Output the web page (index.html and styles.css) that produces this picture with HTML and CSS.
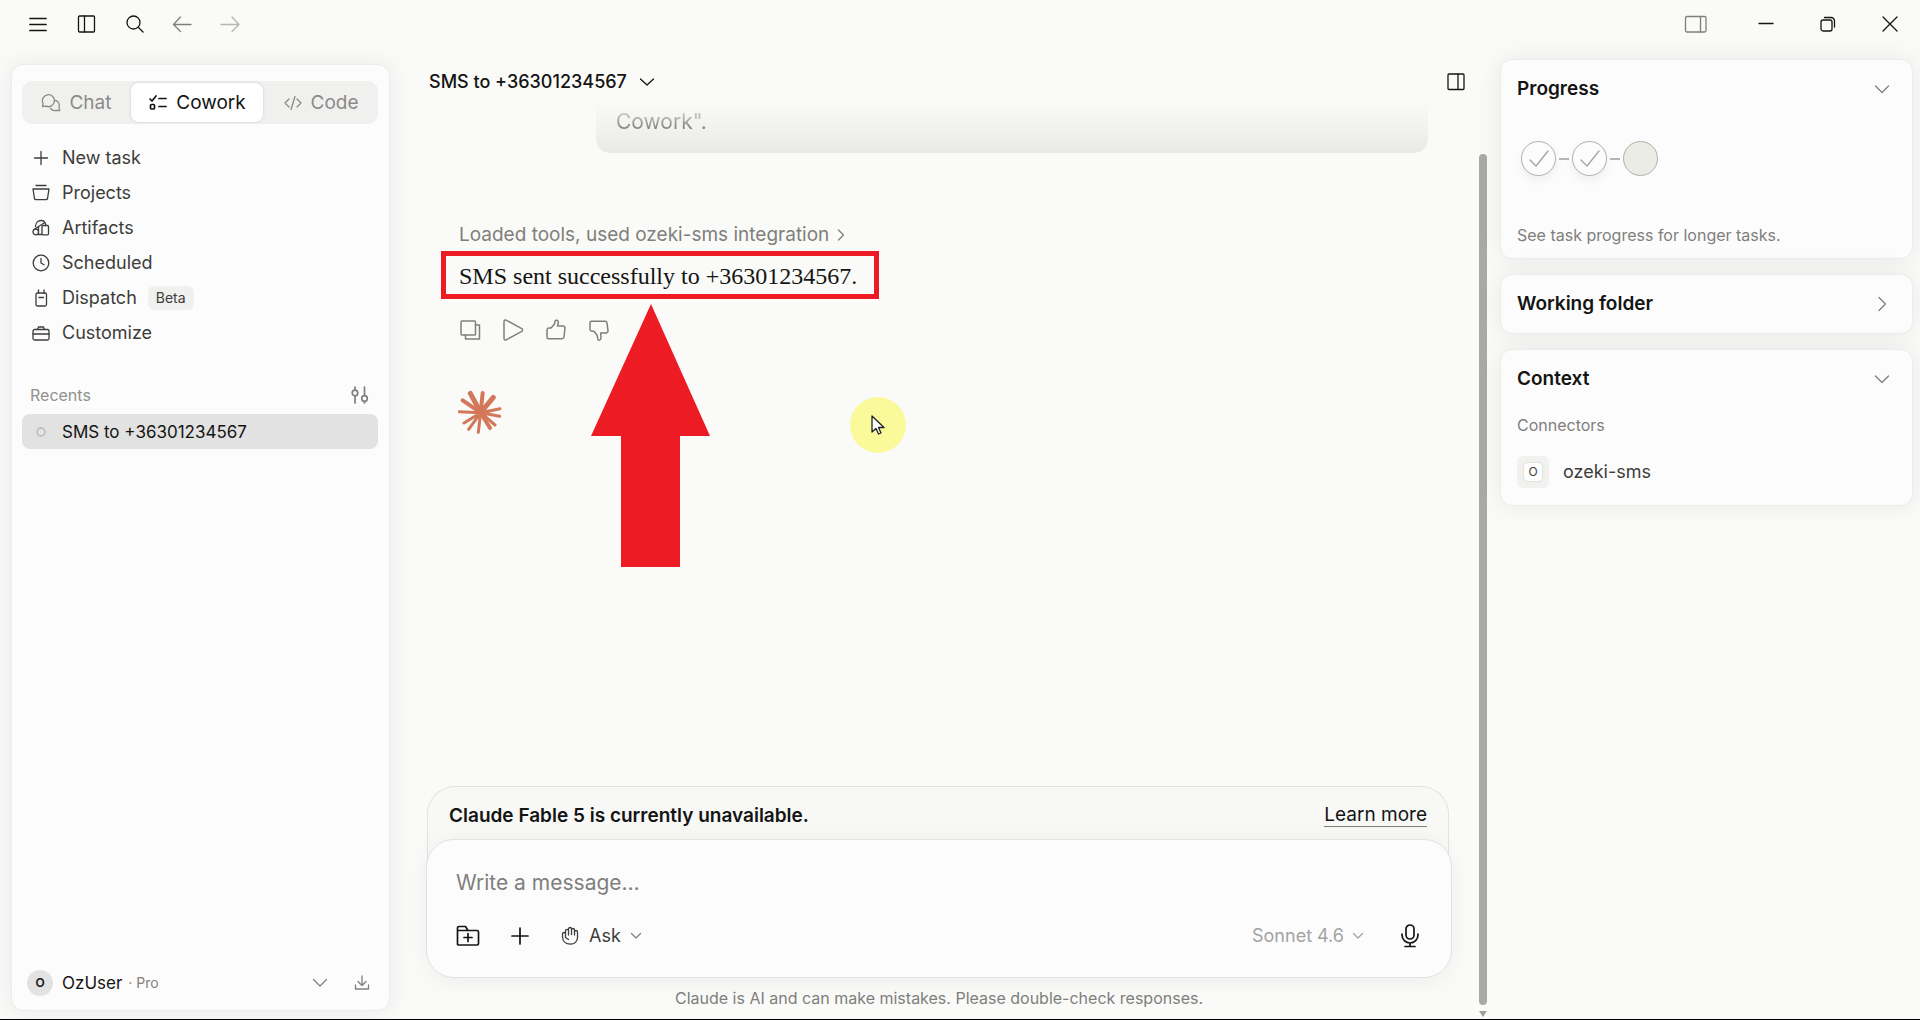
FILE: index.html
```html
<!DOCTYPE html>
<html lang="en">
<head>
    <meta charset="UTF-8">
    <meta name="viewport" content="width=device-width, initial-scale=1.0">
    <title>SMS to +36301234567</title>
    <link rel="stylesheet" href="styles.css">
</head>
<body>

    <!-- Window bar -->
    <header class="titlebar">
        <div class="titlebar-group">
            <button class="icon-button" aria-label="Menu">
                <svg width="20" height="20" viewBox="0 0 20 20" class="strong"><path d="M2 4.5h16M2 10.5h16M2 16.5h16"/></svg>
            </button>
            <button class="icon-button" aria-label="Toggle sidebar">
                <svg width="20" height="20" viewBox="0 0 20 20"><rect x="2.500" y="2" width="16" height="16" rx="1"/><path d="M8.500 2v16"/></svg>
            </button>
            <button class="icon-button" aria-label="Search">
                <svg width="20" height="20" viewBox="0 0 20 20"><circle cx="9.500" cy="8.5" r="6.500"/><path d="M14.500 13.500l4.500 4.500"/></svg>
            </button>
            <button class="icon-button muted" aria-label="Back">
                <svg width="20" height="20" viewBox="0 0 20 20"><path d="M19 10.500H1.500M8.500 3l-7 7.500 7 7"/></svg>
            </button>
            <button class="icon-button faint" aria-label="Forward">
                <svg width="20" height="20" viewBox="0 0 20 20"><path d="M1 10.500h18M12 3l7 7.500-7 7"/></svg>
            </button>
        </div>
        <div class="titlebar-group window-controls">
            <button class="icon-button muted" aria-label="Toggle panel">
                <svg width="24" height="20" viewBox="0 0 24 20"><rect x="1.500" y="2.500" width="20.500" height="15.500" rx="1.500"/><path d="M16.500 2.500v15.500"/></svg>
            </button>
            <button class="icon-button" aria-label="Minimize">
                <svg width="16" height="16" viewBox="0 0 16 16"><path d="M1 7.500h14"/></svg>
            </button>
            <button class="icon-button" aria-label="Restore">
                <svg width="16" height="16" viewBox="0 0 16 16"><rect x="1" y="4" width="11" height="11" rx="2"/><path d="M4.500 1.500h6.500a3.500 3.500 0 0 1 3.500 3.500v6"/></svg>
            </button>
            <button class="icon-button" aria-label="Close">
                <svg width="16" height="16" viewBox="0 0 16 16"><path d="M1 1l14 14M15 1L1 15"/></svg>
            </button>
        </div>
    </header>

    <div class="shell">

        <!-- Sidebar -->
        <aside class="sidebar card">
            <div class="tabs">
                <button class="tab">
                    <svg width="20" height="20" viewBox="0 0 20 20"><path d="M1.500 13.500l.6-3A6 6 0 1 1 5 13.200z"/><path d="M14.500 7.500a5 5 0 0 1 3.600 6.500l.5 3.500h-4a5 5 0 0 1-5-2"/></svg>
                    Chat
                </button>
                <button class="tab active">
                    <svg width="20" height="20" viewBox="0 0 20 20" class="strong"><path d="M2 6l2 2 4-5M11 5.500h7M11 13.500h7"/><rect x="2.500" y="11.500" width="4" height="4.500" rx="1"/></svg>
                    Cowork
                </button>
                <button class="tab">
                    <svg width="20" height="20" viewBox="0 0 20 20"><path d="M6 6l-4 4 4 4M14 6l4 4-4 4M12 3.500L8 16.500"/></svg>
                    Code
                </button>
            </div>

            <nav class="menu">
                <a href="#" class="menu-item">
                    <svg width="20" height="20" viewBox="0 0 20 20"><path d="M3.500 10h13M10 3.500v13"/></svg>
                    New task
                </a>
                <a href="#" class="menu-item">
                    <svg width="20" height="20" viewBox="0 0 20 20"><path d="M5 2.500h10M2 6h16l-1.500 9.500a1.500 1.500 0 0 1-1.500 1.200H5a1.500 1.500 0 0 1-1.500-1.200z"/></svg>
                    Projects
                </a>
                <a href="#" class="menu-item">
                    <svg width="20" height="20" viewBox="0 0 20 20"><circle cx="4.800" cy="14" r="2.800"/><rect x="11" y="7.500" width="6.500" height="9.300" rx="1"/><path d="M4.500 8.500C4.500 4 8 2.500 10.500 2.500S14.500 5 15 7.500M3 11.500L13 5M7.500 13V8.500M7.500 16.500H11"/></svg>
                    Artifacts
                </a>
                <a href="#" class="menu-item">
                    <svg width="20" height="20" viewBox="0 0 20 20"><circle cx="10" cy="10" r="7.800"/><path d="M10 5.500V10l3 1.800"/></svg>
                    Scheduled
                </a>
                <a href="#" class="menu-item">
                    <svg width="20" height="20" viewBox="0 0 20 20"><rect x="5" y="5" width="10.500" height="13" rx="1.500"/><path d="M7.500 5V2M13 5V2M8 9.500h4.500"/></svg>
                    Dispatch
                    <span class="badge">Beta</span>
                </a>
                <a href="#" class="menu-item">
                    <svg width="20" height="20" viewBox="0 0 20 20"><rect x="2" y="6.500" width="16" height="10.500" rx="1.500"/><path d="M6.500 6.500L7.500 4h5l1 2.500M2 11h16"/></svg>
                    Customize
                </a>
            </nav>

            <div class="recents-head">
                <span>Recents</span>
                <button class="icon-button muted" aria-label="Filter recents">
                    <svg width="20" height="20" viewBox="0 0 20 20" class="strong"><circle cx="5" cy="8" r="2.800"/><path d="M5 2v3M5 11v7"/><circle cx="14.500" cy="13.500" r="2.800"/><path d="M14.500 2v8.500M14.500 16.500v1.500"/></svg>
                </button>
            </div>
            <a href="#" class="menu-item selected">
                <svg width="20" height="20" viewBox="0 0 20 20"><circle cx="10" cy="10" r="4"/></svg>
                SMS to +36301234567
            </a>

            <div class="account">
                <span class="avatar">O</span>
                <span class="account-name">OzUser</span>
                <span class="account-plan">· Pro</span>
                <button class="icon-button muted" aria-label="Account menu">
                    <svg width="16" height="16" viewBox="0 0 16 16"><path d="M1.500 4.500L8 11l6.500-6.500"/></svg>
                </button>
                <button class="icon-button muted" aria-label="Download">
                    <svg width="16" height="16" viewBox="0 0 16 16"><path d="M8 1v9M4 6.500L8 10.500l4-4M1.500 10v4h13v-4"/></svg>
                </button>
            </div>
        </aside>

        <!-- Conversation -->
        <main class="chat">
            <div class="chat-column">
                <div class="chat-head">
                    <button class="chat-title">
                        SMS to +36301234567
                        <svg width="16" height="16" viewBox="0 0 16 16"><path d="M1.500 5L8 11l6.500-6"/></svg>
                    </button>
                    <button class="icon-button" aria-label="Toggle details">
                        <svg width="20" height="20" viewBox="0 0 20 20"><rect x="2" y="2" width="16" height="15.500" rx="1"/><path d="M12 2v15.500"/></svg>
                    </button>
                </div>

                <div class="thread">
                    <div class="bubble">Cowork".</div>
                    <button class="tool-line">
                        Loaded tools, used ozeki-sms integration
                        <svg width="16" height="16" viewBox="0 0 16 16"><path d="M5.500 3l5 5-5 5"/></svg>
                    </button>
                    <p class="reply">SMS sent successfully to +36301234567.</p>
                    <div class="reply-actions">
                        <button class="icon-button muted" aria-label="Copy">
                            <svg width="22" height="22" viewBox="0 0 22 22"><rect x="2" y="2" width="14.500" height="14" rx="1"/><path d="M16.500 6H20.500v14H6.500v-4"/></svg>
                        </button>
                        <button class="icon-button muted" aria-label="Read aloud">
                            <svg width="22" height="22" viewBox="0 0 22 22"><path d="M2 2.500a1.500 1.500 0 0 1 2.200-1.300l15.600 8.500a1.500 1.500 0 0 1 0 2.600L4.200 20.800A1.500 1.500 0 0 1 2 19.500z"/></svg>
                        </button>
                        <button class="icon-button muted" aria-label="Good response">
                            <svg width="22" height="22" viewBox="0 0 22 22"><path d="M2 10.500a2 2 0 0 1 2-1.500h2L9.500 5l.7-3c.4-1.300 3.200-1 3.200 1.500l-.9 3.500h5.500a2 2 0 0 1 2 2.200l-1 8.800a2 2 0 0 1-2 1.800H3.500A1.500 1.500 0 0 1 2 18.300z"/></svg>
                        </button>
                        <button class="icon-button muted" aria-label="Bad response">
                            <svg width="22" height="22" viewBox="0 0 22 22"><path d="M2 10.500a2 2 0 0 0 2 1.800h2L9 16l1 4.500c.3 1.200 3 1 3-1.500l-.3-5H18a2 2 0 0 0 2-2.200L19 4a2 2 0 0 0-2-1.800H3.500A1.500 1.500 0 0 0 2 3.700z"/></svg>
                        </button>
                    </div>
                    <svg class="spark" width="44" height="44" viewBox="0 0 132 132">
                        <path stroke-width="15" d="M68 68L37 10M68 68L106 22"/>
                        <path stroke-width="12" d="M68 68L14 31M68 68L74 9M68 68L96 114"/>
                        <path stroke-width="9" d="M68 68L126 56M68 68L125 79M68 68L111 105M68 68L61 127M68 68L32 118M68 68L18 99M68 68L4 65"/>
                    </svg>
                </div>

                <div class="dock">
                    <div class="notice">
                        <strong>Claude Fable 5 is currently unavailable.</strong>
                        <a href="#">Learn more</a>
                    </div>
                    <form class="composer">
                        <textarea rows="1" aria-label="Message" placeholder="Write a message…"></textarea>
                        <div class="composer-tools">
                            <button type="button" class="icon-button" aria-label="Add folder">
                                <svg width="24" height="24" viewBox="0 0 24 24" class="strong"><path d="M1.500 20V4a1.500 1.500 0 0 1 1.500-1.500h6.500L12 6.500h9a1.500 1.500 0 0 1 1.500 1.500v11.500a1.500 1.500 0 0 1-1.500 1.500H2.500a1 1 0 0 1-1-1zM12 9.500v8M8 13.500h8M1.500 6.500H12"/></svg>
                            </button>
                            <button type="button" class="icon-button" aria-label="Add">
                                <svg width="20" height="20" viewBox="0 0 20 20" class="strong"><path d="M2 10h16M10 2v16"/></svg>
                            </button>
                            <button type="button" class="mode">
                                <svg width="20" height="20" viewBox="0 0 20 20"><path d="M5.500 10V4.800a1.500 1.500 0 0 1 3 0V9M8.500 8V3a1.500 1.500 0 0 1 3 0v5.500M11.500 4a1.500 1.500 0 0 1 3 0V9M14.500 6a1.500 1.500 0 0 1 3 0v5.500c0 4-3 6.700-7 6.700-4.500 0-8-2.700-8-7.700V8a1.500 1.500 0 0 1 3 0v3.500l3 2"/></svg>
                                Ask
                                <svg width="12" height="12" viewBox="0 0 12 12" class="muted"><path d="M1.500 3.500L6 8l4.500-4.500"/></svg>
                            </button>
                            <button type="button" class="model">
                                Sonnet 4.6
                                <svg width="12" height="12" viewBox="0 0 12 12"><path d="M1.500 3.500L6 8l4.500-4.500"/></svg>
                            </button>
                            <button type="button" class="icon-button" aria-label="Dictate">
                                <svg width="24" height="24" viewBox="0 0 24 24" class="strong"><rect x="8" y="1" width="8" height="14" rx="4"/><path d="M4 10v1a8 8 0 0 0 16 0v-1M12 19v3.500M7 22.500h10"/></svg>
                            </button>
                        </div>
                    </form>
                    <p class="disclaimer">Claude is AI and can make mistakes. Please double-check responses.</p>
                </div>
            </div>
            <div class="scrollbar">
                <div class="scrollbar-thumb"></div>
                <div class="scrollbar-arrow"></div>
            </div>
        </main>

        <!-- Details -->
        <aside class="details">
            <section class="card panel">
                <div class="panel-head">
                    <h2>Progress</h2>
                    <button class="icon-button muted" aria-label="Collapse progress">
                        <svg width="16" height="16" viewBox="0 0 16 16"><path d="M1.500 5L8 11.500 14.500 5"/></svg>
                    </button>
                </div>
                <div class="steps">
                    <span class="step"><svg width="20" height="20" viewBox="0 0 20 20"><path d="M1 11l6 6L19 2"/></svg></span>
                    <span class="step-link"></span>
                    <span class="step"><svg width="20" height="20" viewBox="0 0 20 20"><path d="M1 11l6 6L19 2"/></svg></span>
                    <span class="step-link"></span>
                    <span class="step pending"></span>
                </div>
                <p class="panel-note">See task progress for longer tasks.</p>
            </section>
            <section class="card panel">
                <div class="panel-head">
                    <h2>Working folder</h2>
                    <button class="icon-button muted" aria-label="Expand working folder">
                        <svg width="16" height="16" viewBox="0 0 16 16"><path d="M5 1.500L11.500 8 5 14.500"/></svg>
                    </button>
                </div>
            </section>
            <section class="card panel">
                <div class="panel-head">
                    <h2>Context</h2>
                    <button class="icon-button muted" aria-label="Collapse context">
                        <svg width="16" height="16" viewBox="0 0 16 16"><path d="M1.500 5L8 11.500 14.500 5"/></svg>
                    </button>
                </div>
                <p class="panel-label">Connectors</p>
                <div class="connector">
                    <span class="connector-icon"><span>O</span></span>
                    ozeki-sms
                </div>
            </section>
        </aside>
    </div>

    <!-- Callouts over the page -->
    <div class="callout-box"></div>
    <svg class="callout-arrow" width="119" height="263" viewBox="0 0 119 263"><path d="M60 0l59 132H89v131H30V132H0z"/></svg>
    <div class="pointer">
        <svg width="14" height="20" viewBox="0 0 14 20"><path d="M1 1v16l4-3.500 2.500 5.500 2.500-1-2.500-5.500H13z"/></svg>
    </div>

</body>
</html>
```

FILE: styles.css
```css
:root {
    --page: #fafaf8;
    --card: #fcfcfc;
    --line: #e2e2e2;
    --text: #141413;
    --text-soft: #3d3d3a;
    --muted: #7f7f7c;
    --faint: #b5b5b2;
    --red: #ed1c24;
}
* {
    box-sizing: border-box;
}
body {
    display: flex;
    flex-direction: column;
    height: 100vh;
    margin: 0;
    overflow: hidden;
    border-bottom: 1px solid #000;
    background: var(--page);
    color: var(--text);
    font-family: Inter, "Liberation Sans", sans-serif;
    font-size: 18px;
    line-height: 24px;
}
button {
    display: flex;
    align-items: center;
    padding: 0;
    border: none;
    background: none;
    color: inherit;
    font: inherit;
    cursor: pointer;
}
a {
    color: inherit;
    text-decoration: none;
}
h2, p {
    margin: 0;
}
svg {
    flex: none;
    fill: none;
    stroke: currentColor;
    stroke-width: 1.3;
    stroke-linecap: round;
    stroke-linejoin: round;
}
svg.strong {
    stroke-width: 1.7;
}
.card {
    background: var(--card);
    border: 1px solid #ececeb;
    border-radius: 12px;
    box-shadow: 0 0 26px rgba(0, 0, 0, 0.07);
}
.muted {
    color: var(--muted);
}
.faint {
    color: var(--faint);
}

/* Window bar */
.titlebar {
    display: flex;
    justify-content: space-between;
    height: 48px;
    padding: 0 22px 0 28px;
}
.titlebar-group {
    display: flex;
    align-items: center;
    gap: 28px;
}
.window-controls {
    gap: 46px;
}
.window-controls .muted {
    margin-right: 4px;
}

.shell {
    display: flex;
    flex: 1;
    min-height: 0;
}

/* Sidebar */
.sidebar {
    display: flex;
    flex-direction: column;
    width: 379px;
    margin: 16px 0 8px 11px;
    padding: 16px 11px 11px 10px;
}
.tabs {
    display: flex;
    gap: 2px;
    height: 43px;
    margin-bottom: 16px;
    padding: 2px;
    border-radius: 10px;
    background: #f0f0ef;
}
.tab {
    flex: 1 1 auto;
    justify-content: center;
    gap: 8px;
    border-radius: 8px;
    color: #8a8a87;
    font-size: 19px;
}
.tab.active {
    background: #fff;
    color: var(--text);
    box-shadow: 0 0 3px rgba(0, 0, 0, 0.15);
}
.menu-item {
    display: flex;
    align-items: center;
    gap: 11px;
    height: 35px;
    padding: 0 9px;
    border-radius: 8px;
    color: var(--text-soft);
}
.badge {
    padding: 0 8px;
    border-radius: 6px;
    background: #f0f0ee;
    font-size: 14px;
}
.recents-head {
    display: flex;
    align-items: center;
    justify-content: space-between;
    height: 38px;
    margin-top: 26px;
    padding: 0 8px;
    color: #91918e;
    font-size: 16px;
}
.menu-item.selected {
    background: #e2e2e2;
    color: var(--text);
    font-size: 17px;
}
.menu-item.selected svg {
    color: var(--faint);
}
.account {
    display: flex;
    align-items: center;
    height: 32px;
    margin-top: auto;
    padding: 0 8px 0 5px;
    color: var(--text);
    font-size: 17px;
}
.avatar {
    width: 26px;
    margin-right: 9px;
    border-radius: 50%;
    background: #e2e2e2;
    font-size: 12px;
    font-weight: 600;
    line-height: 26px;
    text-align: center;
}
.account-plan {
    margin: 0 auto 0 6px;
    color: var(--muted);
    font-size: 14px;
}
.account .icon-button {
    margin-left: 26px;
}

/* Conversation */
.chat {
    display: flex;
    flex: 1;
    min-width: 0;
    margin: 13px 0 0 36px;
}
.chat-column {
    display: flex;
    flex: 1;
    flex-direction: column;
    min-width: 0;
}
.chat-head {
    display: flex;
    align-items: center;
    justify-content: space-between;
    height: 41px;
    padding: 0 13px 0 3px;
}
.chat-title {
    gap: 12px;
    font-weight: 500;
}
.thread {
    display: flex;
    flex: 1;
    flex-direction: column;
    align-items: flex-start;
    min-height: 0;
    padding: 0 51px 0 33px;
}
.bubble {
    align-self: stretch;
    margin-left: 137px;
    padding: 8px 20px 19px;
    border-radius: 0 0 14px 14px;
    background: #e9e9e5;
    font-size: 21px;
    /* the last line of the prompt scrolls out under the header */
    -webkit-mask-image: linear-gradient(transparent, #000);
    mask-image: linear-gradient(transparent, #000);
}
.tool-line {
    gap: 4px;
    margin-top: 70px;
    color: var(--muted);
    font-size: 19px;
}
.reply {
    margin-top: 15px;
    font-family: "Liberation Serif", serif;
    font-size: 24px;
    line-height: 28px;
}
.reply-actions {
    display: flex;
    gap: 21px;
    margin-top: 29px;
}
.reply-actions svg {
    stroke-width: 1.5;
}
.spark {
    margin-top: 49px;
    margin-left: -1px;
    stroke: #d2775a;
}
.dock {
    margin-right: 27px;
}
.notice {
    display: flex;
    align-items: center;
    justify-content: space-between;
    height: 80px;
    margin: 0 3px -27px 1px;
    padding: 0 21px 22px;
    border: 1px solid var(--line);
    border-bottom: none;
    border-radius: 28px 28px 0 0;
    background: #f8f8f7;
    font-size: 19px;
}
.notice strong {
    font-weight: 600;
}
.notice a {
    border-bottom: 1px solid var(--muted);
    line-height: 22px;
}
.composer {
    position: relative;
    padding: 29px 29px 27px;
    border: 1px solid var(--line);
    border-radius: 28px;
    background: var(--card);
    box-shadow: 0 4px 24px rgba(0, 0, 0, 0.05);
}
.composer textarea {
    display: block;
    width: 100%;
    height: 28px;
    margin-bottom: 25px;
    padding: 0;
    border: none;
    outline: none;
    background: none;
    font-family: inherit;
    font-size: 21px;
    line-height: 28px;
    resize: none;
}
.composer textarea::placeholder {
    color: var(--muted);
}
.composer-tools {
    display: flex;
    align-items: center;
    height: 28px;
    gap: 30px;
}
.mode {
    gap: 9px;
    color: var(--text-soft);
}
.model {
    gap: 8px;
    margin: 0 4px 0 auto;
    color: #a3a3a0;
}
.disclaimer {
    padding: 8px 0 9px;
    color: var(--muted);
    font-size: 16px;
    text-align: center;
}
.scrollbar {
    display: flex;
    flex-direction: column;
    align-items: center;
    width: 8px;
    padding: 93px 0 2px;
}
.scrollbar-thumb {
    flex: 1;
    width: 8px;
    margin-bottom: 6px;
    border-radius: 4px;
    background: #a9a9a7;
}
.scrollbar-arrow {
    border: 4px solid transparent;
    border-top: 6px solid #a0a09e;
    border-bottom: none;
}

/* Details */
.details {
    display: flex;
    flex-direction: column;
    gap: 15px;
    width: 413px;
    margin: 11px 7px 0 13px;
}
.panel {
    padding: 17px 16px;
}
.panel-head {
    display: flex;
    align-items: center;
    justify-content: space-between;
    height: 24px;
    padding-right: 6px;
}
.panel h2 {
    font-size: 19px;
    font-weight: 600;
}
.steps {
    display: flex;
    align-items: center;
    margin: 40px 0 47px 4px;
}
.step {
    display: flex;
    align-items: center;
    justify-content: center;
    width: 35px;
    height: 35px;
    border: 1px solid #b0b0ae;
    border-radius: 50%;
    background: var(--card);
    color: #a3a3a0;
    box-shadow: 0 4px 10px rgba(0, 0, 0, 0.06);
}
.step.pending {
    background: #ecece6;
    box-shadow: none;
}
.step-link {
    width: 10px;
    height: 2px;
    margin: 0 3px;
    background: #b5b5b2;
}
.panel-note, .panel-label {
    color: var(--muted);
    font-size: 16px;
}
.panel-note {
    margin-bottom: -6px;
}
.panel-label {
    margin: 22px 0 19px;
}
.connector {
    display: flex;
    align-items: center;
    gap: 14px;
    color: var(--text-soft);
}
.connector-icon {
    padding: 7px;
    border-radius: 6px;
    background: #f1f1f0;
}
.connector-icon span {
    display: block;
    width: 18px;
    border-radius: 4px;
    background: #fff;
    font-size: 12px;
    line-height: 18px;
    text-align: center;
    box-shadow: 0 0 2px rgba(0, 0, 0, 0.2);
}

/* Callouts over the page */
.callout-box {
    position: absolute;
    top: 251px;
    left: 441px;
    width: 438px;
    height: 48px;
    border: 5px solid var(--red);
}
.callout-arrow {
    position: absolute;
    top: 304px;
    left: 591px;
    fill: var(--red);
    stroke: none;
}
.pointer {
    position: absolute;
    top: 397px;
    left: 850px;
    width: 56px;
    height: 56px;
    padding: 18px 21px;
    border-radius: 50%;
    background: #fafa9b;
}
.pointer svg {
    fill: #fff;
    stroke: #222;
}
```
